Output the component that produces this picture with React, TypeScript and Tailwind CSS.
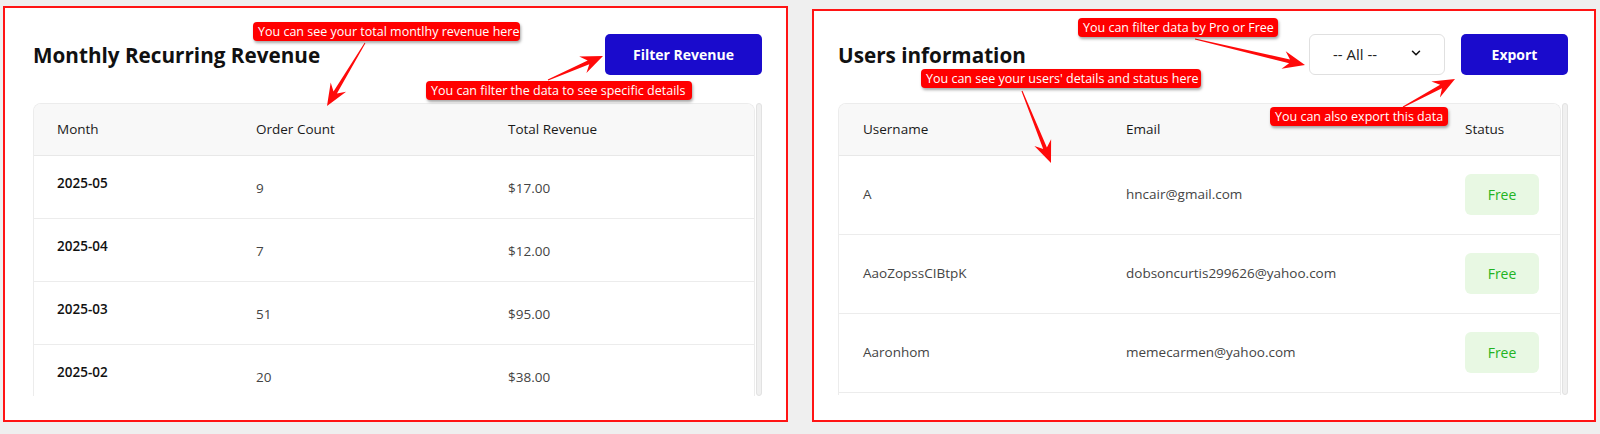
import { ChevronDown } from "lucide-react";

const revenue = [
  { month: "2025-05", count: 9, total: "$17.00" },
  { month: "2025-04", count: 7, total: "$12.00" },
  { month: "2025-03", count: 51, total: "$95.00" },
  { month: "2025-02", count: 20, total: "$38.00" },
];

const users = [
  { name: "A", email: "hncair@gmail.com", status: "Free" },
  { name: "AaoZopssCIBtpK", email: "dobsoncurtis299626@yahoo.com", status: "Free" },
  { name: "Aaronhom", email: "memecarmen@yahoo.com", status: "Free" },
];

// tapered annotation arrow, from a tail point to the tip
function arrowPoints(x1: number, y1: number, x2: number, y2: number, L = 22, W = 9, w0 = 1, w1 = 4) {
  const dx = x2 - x1;
  const dy = y2 - y1;
  const len = Math.hypot(dx, dy);
  const ux = dx / len;
  const uy = dy / len;
  const px = -uy;
  const py = ux;
  const nx = x2 - ux * L * 0.72;
  const ny = y2 - uy * L * 0.72;
  const bx = x2 - ux * L;
  const by = y2 - uy * L;
  const pts = [
    [x1 + (px * w0) / 2, y1 + (py * w0) / 2],
    [nx + (px * w1) / 2, ny + (py * w1) / 2],
    [bx + px * W, by + py * W],
    [x2, y2],
    [bx - px * W, by - py * W],
    [nx - (px * w1) / 2, ny - (py * w1) / 2],
    [x1 - (px * w0) / 2, y1 - (py * w0) / 2],
  ];
  return pts.map((p) => p.map((v) => v.toFixed(1)).join(",")).join(" ");
}

const arrows = [
  [365, 43, 327, 106],
  [548, 80, 603, 56],
  [1195, 39, 1305, 65],
  [1022, 91, 1051, 163],
  [1403, 107, 1455, 79],
];

const labels = [
  { text: "You can see your total montlhy revenue here", cls: "left-[253px] top-[22px] w-[267px]" },
  { text: "You can filter the data to see specific details", cls: "left-[426px] top-[81px] w-[266px]" },
  { text: "You can filter data by Pro or Free", cls: "left-[1078px] top-[18px] w-[200px]" },
  { text: "You can see your users' details and status here", cls: "left-[921px] top-[69px] w-[280px]" },
  { text: "You can also export this data", cls: "left-[1270px] top-[107px] w-[178px]" },
];

function Scrollbar() {
  return <div className="w-[6px] h-full rounded-[3px] bg-[#f0f0f0] border border-[#e2e2e2]"></div>;
}

export default function App() {
  return (
    <div className="relative w-[1600px] h-[434px] overflow-hidden bg-[#efefef] font-['Open_Sans',sans-serif]">
      <div className="flex items-start gap-[24px] pt-[6px] pl-[3px]">
        {/* revenue panel */}
        <section className="w-[785px] h-[416px] bg-white border-2 border-[#ff1414] pl-[28px] pr-[24px] pt-[26px]">
          <div className="flex items-center justify-between h-[41px]">
            <h2 className="pt-[3px] text-[20.7px] font-bold text-[#111]">Monthly Recurring Revenue</h2>
            <button className="w-[157px] h-[41px] rounded-[5px] bg-[#1a0bcc] text-white text-[14px] font-bold">
              Filter Revenue
            </button>
          </div>

          <div className="mt-[28px] flex gap-[1px] h-[293px]">
            <div className="flex-1 overflow-hidden rounded-t-[8px] border border-b-0 border-[#ececec]">
              <table className="w-full table-fixed border-collapse text-[13.5px] leading-[21px]">
                <thead>
                  <tr className="bg-[#f8f8f8] border-b border-[#e8e8e8]">
                    <th className="w-[198px] h-[51px] pl-[23px] text-left font-medium text-[#1a1a1a]">Month</th>
                    <th className="w-[252px] pl-[24px] text-left font-medium text-[#1a1a1a]">Order Count</th>
                    <th className="pl-[24px] text-left font-medium text-[#1a1a1a]">Total Revenue</th>
                  </tr>
                </thead>
                <tbody>
                  {revenue.map((r) => (
                    <tr key={r.month} className="border-b border-[#ececec]">
                      <td className="pl-[23px] pt-[17px] pb-[24px] align-middle font-semibold text-[#111]">{r.month}</td>
                      <td className="pl-[24px] pt-[22px] pb-[19px] align-middle text-[#444]">{r.count}</td>
                      <td className="pl-[24px] pt-[22px] pb-[19px] align-middle text-[#444]">{r.total}</td>
                    </tr>
                  ))}
                </tbody>
              </table>
            </div>
            <Scrollbar />
          </div>
        </section>

        {/* users panel */}
        <section className="mt-[3px] w-[784px] h-[413px] bg-white border-2 border-[#ff1414] pl-[24px] pr-[26px] pt-[23px]">
          <div className="flex items-center h-[41px]">
            <h2 className="flex-1 pt-[3px] text-[20.7px] font-bold text-[#111]">Users information</h2>
            <div className="w-[136px] h-[41px] rounded-[6px] border border-[#e0e0e0] bg-white flex items-center justify-between pl-[23px] pr-[21px] text-[15px] text-[#222]">
              <span>-- All --</span>
              <ChevronDown size={14} strokeWidth={2.6} className="text-[#111] -mt-[4px]" />
            </div>
            <button className="ml-[16px] w-[107px] h-[41px] rounded-[5px] bg-[#1a0bcc] text-white text-[14px] font-bold">
              Export
            </button>
          </div>

          <div className="mt-[28px] flex gap-[1px] h-[292px]">
            <div className="flex-1 overflow-hidden rounded-t-[8px] border border-b-0 border-[#ececec]">
              <table className="w-full table-fixed border-collapse text-[13.5px] leading-[21px]">
                <thead>
                  <tr className="bg-[#f8f8f8] border-b border-[#e8e8e8]">
                    <th className="w-[263px] h-[51px] pl-[24px] text-left font-medium text-[#1a1a1a]">Username</th>
                    <th className="w-[339px] pl-[24px] text-left font-medium text-[#1a1a1a]">Email</th>
                    <th className="pl-[24px] text-left font-medium text-[#1a1a1a]">Status</th>
                  </tr>
                </thead>
                <tbody>
                  {users.map((u) => (
                    <tr key={u.name} className="border-b border-[#ececec]">
                      <td className="pl-[24px] h-[79px] align-middle text-[#444]">{u.name}</td>
                      <td className="pl-[24px] align-middle text-[#444]">{u.email}</td>
                      <td className="pl-[24px] align-middle">
                        <span className="flex items-center justify-center w-[74px] h-[41px] rounded-[6px] bg-[#e8f8e3] text-[14px] font-medium text-[#22b322]">
                          {u.status}
                        </span>
                      </td>
                    </tr>
                  ))}
                </tbody>
              </table>
            </div>
            <Scrollbar />
          </div>
        </section>
      </div>

      {/* annotation layer */}
      <svg className="absolute left-0 top-0 pointer-events-none" width="1600" height="434" viewBox="0 0 1600 434">
        {arrows.map((a, i) => (
          <polygon key={i} points={arrowPoints(a[0], a[1], a[2], a[3])} fill="#ff0a0a" />
        ))}
      </svg>
      {labels.map((l) => (
        <div
          key={l.text}
          className={`absolute h-[19px] rounded-[4px] bg-[#ff0000] px-[5px] text-[12.5px] leading-[19px] text-white whitespace-nowrap shadow-[1px_2px_3px_rgba(0,0,0,0.35)] ${l.cls}`}
        >
          {l.text}
        </div>
      ))}
    </div>
  );
}
